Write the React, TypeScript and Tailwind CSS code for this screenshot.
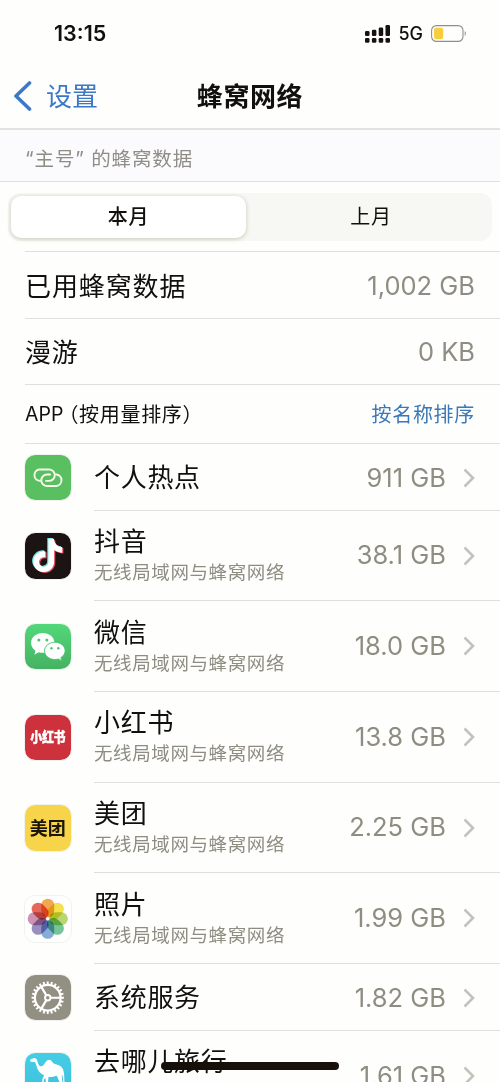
import type { ReactNode } from "react";

type AppRow = {
  name: string;
  usage: string;
  icon: ReactNode;
  network?: boolean;
};

const notePath =
  "M12.525.02c1.31-.02 2.61-.01 3.91-.02.08 1.53.63 3.09 1.75 4.17 1.12 1.11 2.7 1.62 4.24 1.79v4.03c-1.44-.05-2.89-.35-4.2-.97-.57-.26-1.1-.59-1.62-.93-.01 2.92.01 5.84-.02 8.75-.08 1.4-.54 2.79-1.35 3.94-1.31 1.92-3.58 3.17-5.91 3.21-1.43.08-2.86-.31-4.08-1.03-2.02-1.19-3.44-3.37-3.65-5.71-.02-.5-.03-1-.01-1.49.18-1.9 1.12-3.72 2.58-4.96 1.66-1.44 3.98-2.13 6.15-1.72.02 1.48-.04 2.96-.04 4.44-.99-.32-2.15-.23-3.02.37-.63.41-1.11 1.04-1.36 1.75-.21.51-.15 1.07-.14 1.61.24 1.64 1.82 3.02 3.5 2.87 1.12-.01 2.19-.66 2.77-1.61.19-.33.4-.67.41-1.06.1-1.79.06-3.57.07-5.36.01-4.03-.01-8.05.02-12.07z";

const petals = [
  { angle: 0, color: "#f2a750" },
  { angle: 45, color: "#f2e34c" },
  { angle: 90, color: "#b9d673" },
  { angle: 135, color: "#74c598" },
  { angle: 180, color: "#86add8" },
  { angle: 225, color: "#9a8fc2" },
  { angle: 270, color: "#cc93b2" },
  { angle: 315, color: "#e4695a" },
];

const teeth = Array.from({ length: 24 }, (_, i) => i * 15);

function HotspotIcon() {
  return (
    <svg className="size-full bg-[#5abf61]" viewBox="0 0 45 45" fill="none" stroke="#f4fbe9" strokeWidth="1.9" strokeLinecap="round">
      <path d="M14.800 25.600a5.700 5.700 0 0 1-.8-11.300h9.800a5.650 5.650 0 0 1 0 11.300h-3" />
      <path d="M30.800 19.300a5.750 5.750 0 0 1 .5 11.400h-9.500a5.700 5.700 0 0 1 0-11.400h3" />
    </svg>
  );
}

function DouyinIcon() {
  return (
    <svg className="size-full bg-[#1b1412]" viewBox="0 0 45 45">
      <g transform="translate(4.9 4.9) scale(1.37)">
        <path d={notePath} fill="#6fe3e0" />
        <path d={notePath} fill="#e0506a" transform="translate(1.7 1.3)" />
        <path d={notePath} fill="#fff" transform="translate(.85 .65)" />
      </g>
    </svg>
  );
}

function WeChatIcon() {
  return (
    <svg className="size-full bg-linear-to-b from-[#52d87a] to-[#45b262]" viewBox="0 0 45 45">
      <path d="M17.600 9C11 9 6 13.200 6 18.700c0 3.200 1.700 5.800 4.300 7.600l-1 4 4.200-2.300c1.300.4 2.600.5 4.100.5 6.500 0 11.600-4.300 11.600-9.800S24.100 9 17.600 9z" fill="#fff" />
      <path d="M29.500 18c-5.700 0-10.200 3.800-10.200 8.500s4.500 8.600 10.200 8.600c1.300 0 2.500-.2 3.600-.5l3.200 1.900-.8-3.300c2.500-1.600 4.200-3.900 4.200-6.700 0-4.700-4.500-8.500-10.200-8.500z" fill="#fff" stroke="#4cc56d" strokeWidth=".9" />
      <g fill="#4cc56d">
        <circle cx="13.700" cy="15.800" r="1.500" />
        <circle cx="21.600" cy="15.800" r="1.500" />
        <circle cx="26.200" cy="24" r="1.200" />
        <circle cx="33" cy="24" r="1.200" />
      </g>
    </svg>
  );
}

function PhotosIcon() {
  return (
    <svg className="size-full bg-white" viewBox="0 0 45 45">
      <g className="isolate">
        {petals.map((petal) => (
          <rect
            key={petal.angle}
            x="16.100"
            y="2.600"
            width="12.800"
            height="18.400"
            rx="6.400"
            fill={petal.color}
            className="mix-blend-multiply"
            transform={`rotate(${petal.angle} 22.5 22.5)`}
          />
        ))}
      </g>
      <circle cx="22.500" cy="22.500" r="1.200" fill="#fff" />
    </svg>
  );
}

function GearIcon() {
  return (
    <svg className="size-full bg-[#929083]" viewBox="0 0 45 45" fill="none" stroke="#fff">
      <circle cx="22.500" cy="22.500" r="12.700" strokeWidth="2.200" />
      {teeth.map((angle) => (
        <path key={angle} d="M22.500 9.300V6.500" strokeWidth="1.900" transform={`rotate(${angle} 22.5 22.5)`} />
      ))}
      <circle cx="22.500" cy="22.500" r="2.700" strokeWidth="1.900" />
      <path d="M25.300 22.500H35M21.100 20.100l-4.900-8.400M21.100 24.900l-4.900 8.400" strokeWidth="2.200" />
    </svg>
  );
}

function CamelIcon() {
  return (
    <svg className="size-full bg-linear-to-b from-[#45cde6] to-[#3dc0dd]" viewBox="0 0 45 45">
      <path
        d="M5 6.700l2.500-1.200c1.200-.7 2.500-.7 3.500.2 1.300 1.200 1.300 3.200 2 4.900.8 1.800 2 2.700 3.300 2.500 2-.5 2.800-2.600 4.200-4.300 1.600-2 3.900-2.700 5.500-1.200 1.300 1.200 1.700 2.700 3.600 3.300 3.300.8 6.200 1.800 7.700 4.600 1.300 2.700 1.600 6.300 1.700 13.200l-1.200-.2c-.2-3.500-.5-5.500-1.300-7.200-.4 2.800.2 5.600.8 8.400l.3 5h-2.400l-.8-5.500-3-6.600c-2.800 1.200-5.700 1.400-8.100.8l-.5 5 1.300 6.300h-2.300l-1.200-6.200-.5-4-1.500 2.200-.2 4.500-1.400-.2.200-5.200 1.700-3.800c-3.300-1.500-5.500-3.900-6.800-7-.9-2.300-1.300-4.600-2.300-6L6.500 8.800c-1 0-1.500-.9-1.500-2.100z"
        fill="#fff"
      />
    </svg>
  );
}

const rows: AppRow[] = [
  { name: "个人热点", usage: "911 GB", icon: <HotspotIcon /> },
  { name: "抖音", usage: "38.1 GB", icon: <DouyinIcon />, network: true },
  { name: "微信", usage: "18.0 GB", icon: <WeChatIcon />, network: true },
  {
    name: "小红书",
    usage: "13.8 GB",
    network: true,
    icon: (
      <span className="flex size-full items-center justify-center bg-[#cd323c] text-[12px] font-black tracking-[-0.3px] text-white">
        <span className="scale-y-115 [-webkit-text-stroke:0.3px_white]">小红书</span>
      </span>
    ),
  },
  {
    name: "美团",
    usage: "2.25 GB",
    network: true,
    icon: (
      <span className="flex size-full items-center justify-center bg-[#f7d44a] text-[18px] font-bold text-[#1c1608]">
        美团
      </span>
    ),
  },
  { name: "照片", usage: "1.99 GB", icon: <PhotosIcon />, network: true },
  { name: "系统服务", usage: "1.82 GB", icon: <GearIcon /> },
  { name: "去哪儿旅行", usage: "1.61 GB", icon: <CamelIcon />, network: true },
];

function StatusBar() {
  return (
    <div className="flex h-[62px] items-center justify-between pt-[5px] pr-[33px] pl-[54px]">
      <span className="text-[21.500px] font-semibold">13:15</span>
      <div className="flex items-center">
        <svg className="h-[18px] w-[26px]" viewBox="0 0 26 18" fill="#17120d">
          <rect x="0" y="6" width="4.500" height="5" rx="1.300" />
          <rect x="6.900" y="4.700" width="4.500" height="6.300" rx="1.300" />
          <rect x="13.700" y="2.500" width="4.500" height="8.500" rx="1.300" />
          <rect x="20.500" y="0" width="4.500" height="11" rx="1.300" />
          <rect x="0" y="13" width="4.500" height="4.700" rx="1.300" />
          <rect x="6.900" y="13" width="4.500" height="4.700" rx="1.300" />
          <rect x="13.700" y="13" width="4.500" height="4.700" rx="1.300" />
          <rect x="20.500" y="13" width="4.500" height="4.700" rx="1.300" />
        </svg>
        <span className="ml-[7px] text-[18px] font-medium">5G</span>
        <svg className="ml-[8px] h-[17px] w-[36px]" viewBox="0 0 36 17">
          <rect x=".6" y=".6" width="31.400" height="15.800" rx="4.800" fill="none" stroke="#918f88" strokeWidth="1.100" />
          <rect x="3" y="2.800" width="9.200" height="11.400" rx="2.200" fill="#f8cd3e" />
          <path d="M33.700 6.200c1.500.5 1.500 4.100 0 4.600z" fill="#918f88" />
        </svg>
      </div>
    </div>
  );
}

function UsageRow({ row }: { row: AppRow }) {
  return (
    <li className={row.network ? "flex h-[90.700px] pl-[25px]" : "flex h-[66.700px] pl-[25px]"}>
      <div className="mr-[23.500px] size-[45.500px] shrink-0 self-center overflow-hidden rounded-[10.500px] ring-1 ring-black/5">
        {row.icon}
      </div>
      <div className={row.network ? "flex flex-1 items-center border-b border-[#dfdfdd] pr-[25px]" : "flex flex-1 items-center border-b border-[#dfdfdd] pt-[3px] pr-[25px]"}>
        <div className="flex-1">
          <p className="text-[26px] leading-[34px] tracking-[0.7px]">{row.name}</p>
          {row.network && (
            <p className="text-[18.500px] leading-[27px] tracking-[0.6px] text-[#8f8d82]">无线局域网与蜂窝网络</p>
          )}
        </div>
        <span className="text-[25.500px] text-[#8f8d82]">{row.usage}</span>
        <svg className="ml-[17px] h-[20px] w-[12px]" viewBox="0 0 12 20" fill="none" stroke="#c4c3ba" strokeWidth="2.600">
          <path d="M1.500 1.500l8.500 8.500-8.500 8.500" />
        </svg>
      </div>
    </li>
  );
}

export default function App() {
  return (
    <div className="relative h-[1082px] w-[500px] overflow-hidden bg-[#fefefd] font-['Inter','Noto_Sans_CJK_SC',sans-serif] text-[#12100c]">
      <header className="h-[130px] border-b-2 border-[#e3e2de]">
        <StatusBar />
        <div className="grid h-[68px] grid-cols-[1fr_auto_1fr] items-center">
          <a className="flex items-center pl-[13px] text-[#3b78c8]">
            <svg className="h-[30px] w-[19px]" viewBox="0 0 19 30" fill="none" stroke="currentColor" strokeWidth="3.600" strokeLinecap="round" strokeLinejoin="round">
              <path d="M16.500 2L3 15l13.500 13" />
            </svg>
            <span className="ml-[14px] text-[26px]">设置</span>
          </a>
          <h1 className="text-[26px] font-bold tracking-[0.6px]">蜂窝网络</h1>
        </div>
      </header>

      <h2 className="flex h-[52px] items-center border-b border-[#e0dfe0] bg-[#fbfafd] pt-[8px] pl-[25px] text-[19.500px] tracking-[0.9px] text-[#8f8d86]">
        “主号” 的蜂窝数据
      </h2>

      <div className="mx-[8px] mt-[11px] flex h-[48px] rounded-[12px] bg-[#f7f7f3] p-[3px] text-[20px]">
        <button className="flex w-[235px] items-center justify-center rounded-[10px] bg-white font-medium tracking-[0.8px] shadow-[0_1px_4px_rgba(90,90,50,0.3)]">
          本月
        </button>
        <button className="flex-1 pl-[7px] tracking-[0.8px]">上月</button>
      </div>

      <div className="mt-[10px] ml-[25px] border-t border-[#dfdfdd]">
        <div className="flex h-[67px] items-center justify-between border-b border-[#dfdfdd] pt-[2px] pr-[25px] text-[26px]">
          <span className="tracking-[0.9px]">已用蜂窝数据</span>
          <span className="text-[25.500px] text-[#8f8d82]">1,002 GB</span>
        </div>
        <div className="flex h-[66px] items-center justify-between border-b border-[#dfdfdd] pt-[2px] pr-[25px] text-[26px]">
          <span className="tracking-[0.700px]">漫游</span>
          <span className="text-[25.500px] text-[#8f8d82]">0 KB</span>
        </div>
        <div className="flex h-[59px] items-center justify-between border-b border-[#dfdfdd] pt-[2px] pr-[25px] text-[20px]">
          <span className="flex items-center">
            <span className="text-[19.500px]">APP</span>
            <span className="ml-[5px] tracking-[0.700px] [font-feature-settings:'halt']">（按用量排序）</span>
          </span>
          <a className="tracking-[0.700px] text-[#3b78b8]">按名称排序</a>
        </div>
      </div>

      <ul>
        {rows.map((row) => (
          <UsageRow key={row.name} row={row} />
        ))}
      </ul>

      <div className="absolute bottom-[12px] left-[161px] h-[8px] w-[178px] rounded-full bg-[#17100a]" />
    </div>
  );
}
